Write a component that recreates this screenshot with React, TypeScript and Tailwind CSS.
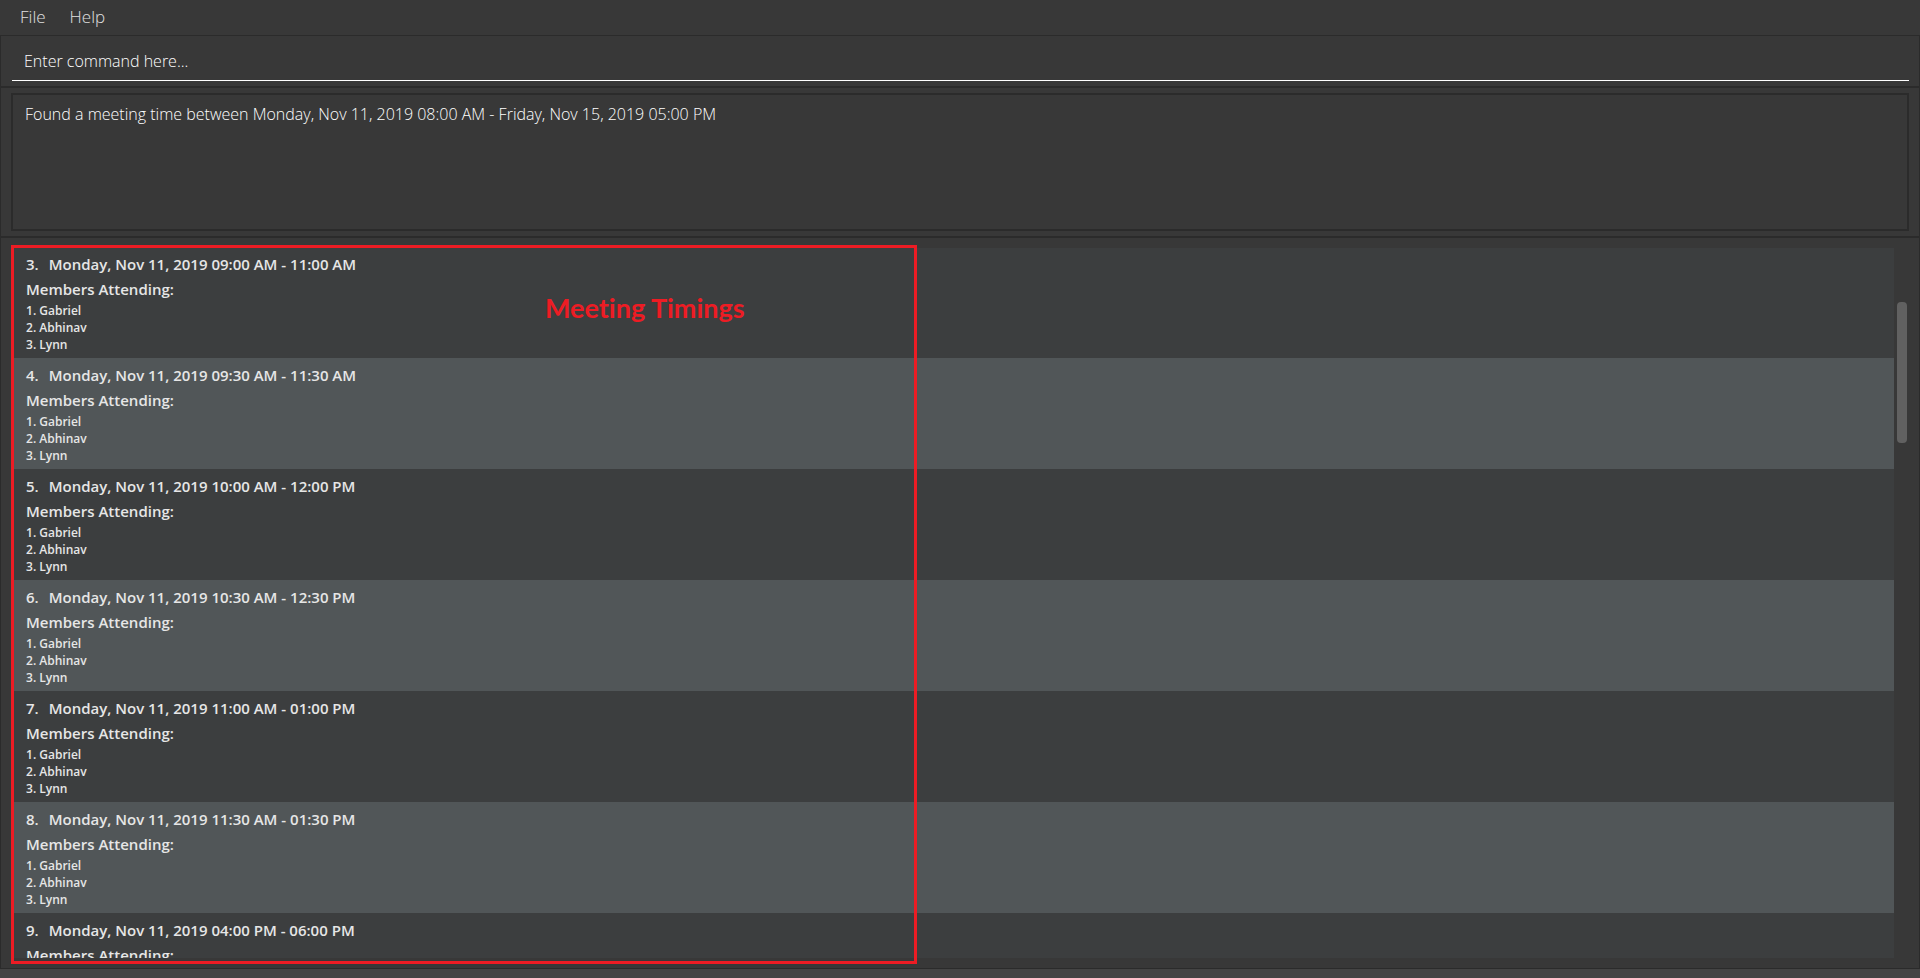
const meetings = [
  { id: 3, time: "Monday, Nov 11, 2019 09:00 AM - 11:00 AM" },
  { id: 4, time: "Monday, Nov 11, 2019 09:30 AM - 11:30 AM" },
  { id: 5, time: "Monday, Nov 11, 2019 10:00 AM - 12:00 PM" },
  { id: 6, time: "Monday, Nov 11, 2019 10:30 AM - 12:30 PM" },
  { id: 7, time: "Monday, Nov 11, 2019 11:00 AM - 01:00 PM" },
  { id: 8, time: "Monday, Nov 11, 2019 11:30 AM - 01:30 PM" },
  { id: 9, time: "Monday, Nov 11, 2019 04:00 PM - 06:00 PM" },
];

const members = ["Gabriel", "Abhinav", "Lynn"];

function MenuBar() {
  return (
    <nav className="flex h-[35px] shrink-0 items-center gap-6 px-5 pb-[2px] text-[17px] leading-6 font-light text-[#e0e0e0]">
      <button type="button">File</button>
      <button type="button">Help</button>
    </nav>
  );
}

function MeetingRow({ id, time }: { id: number; time: string }) {
  return (
    <li className="h-[111px] shrink-0 px-[13px] py-[5px] text-[#e6e6e6] odd:bg-[#3c3e3f] even:bg-[#515658]">
      <h2 className="flex gap-[10px] text-[15px] leading-[25px] font-semibold">
        <span>{id}.</span>
        <span>{time}</span>
      </h2>
      <p className="text-[15px] leading-[25px] font-semibold">Members Attending:</p>
      <ol className="text-[12px] leading-[17px] font-semibold">
        {members.map((name, index) => (
          <li key={name}>
            {index + 1}. {name}
          </li>
        ))}
      </ol>
    </li>
  );
}

export default function App() {
  return (
    <div className="flex h-screen flex-col overflow-hidden bg-[#383838] font-['Open_Sans','Noto_Sans',sans-serif]">
      <MenuBar />
      <main className="flex min-h-0 flex-1 flex-col border border-[#2b2b2b]">
        <section className="border-b-2 border-[#2b2b2b] pt-[10px] pr-[10px] pb-[5px] pl-[11px]">
          <input
            type="text"
            aria-label="Command"
            placeholder="Enter command here..."
            className="block h-[35px] w-full border-b border-white bg-transparent px-3 pb-1 text-[16px] font-light text-white outline-none placeholder:text-white placeholder:opacity-100"
          />
        </section>
        <section className="border-b-2 border-[#2b2b2b] px-[10px] py-[5px]">
          <div className="h-[138px] border-2 border-[#2b2b2b] px-3 py-[7px] text-[16px] leading-6 font-light text-white">
            Found a meeting time between Monday, Nov 11, 2019 08:00 AM - Friday, Nov 15, 2019 05:00 PM
          </div>
        </section>
        <section className="relative flex min-h-0 flex-1 gap-[3px] pt-[10px] pr-3 pb-[10px] pl-3">
          <div className="min-h-0 flex-1 overflow-hidden">
            <ul className="-mt-px flex flex-col">
              {meetings.map((meeting) => (
                <MeetingRow key={meeting.id} {...meeting} />
              ))}
            </ul>
          </div>
          <div className="w-[10px] pt-[54px]">
            <div className="h-[141px] rounded-[4px] bg-[#616161]" />
          </div>
          <div className="pointer-events-none absolute top-[7px] bottom-1 left-[10px] w-[906px] border-[3px] border-[#ed1c24]">
            <p className="pt-[42px] pl-[531px] font-['Lato',sans-serif] text-[27px] leading-9 font-bold text-[#ed1c24] [font-variant-ligatures:none]">
              Meeting Timings
            </p>
          </div>
        </section>
      </main>
      <footer className="h-[9px] shrink-0 bg-[#444444]" />
    </div>
  );
}
